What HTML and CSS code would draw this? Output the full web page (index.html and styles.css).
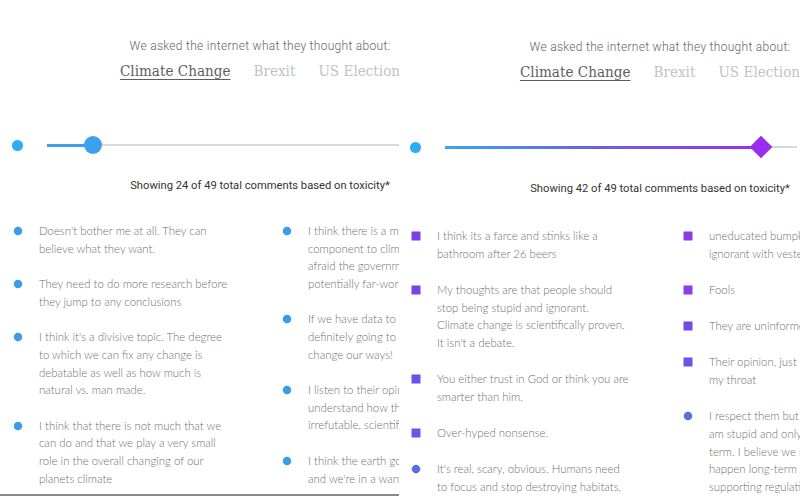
FILE: index.html
```html
<!DOCTYPE html>
<html lang="en">
<head>
<meta charset="utf-8">
<title>Toxicity comments</title>
<link rel="stylesheet" href="styles.css">
</head>
<body>
<div class="page">
  <section class="panel panel--ruled">
    <div class="center">
      <p class="intro">We asked the internet what they thought about:</p>
      <nav class="tabs">
        <span class="tab tab--active">Climate Change</span>
        <span class="tab">Brexit</span>
        <span class="tab">US Election</span>
      </nav>
    </div>
    <div class="slider">
      <span class="slider__dot"></span>
      <div class="slider__track">
        <div class="slider__fill slider__fill--blue" style="width:46px"></div>
        <span class="slider__thumb" style="left:46px"></span>
      </div>
    </div>
    <div class="center">
      <p class="showing">Showing 24 of 49 total comments based on toxicity*</p>
    </div>
    <div class="comments">
      <ul class="col">
        <li class="comment"><span class="bullet bullet--round" style="background:#3b9de6"></span><p class="comment__text">Doesn't bother me at all. They can<br>believe what they want.</p></li>
        <li class="comment"><span class="bullet bullet--round" style="background:#3b9de6"></span><p class="comment__text">They need to do more research before<br>they jump to any conclusions</p></li>
        <li class="comment"><span class="bullet bullet--round" style="background:#3b9de6"></span><p class="comment__text">I think it's a divisive topic. The degree<br>to which we can fix any change is<br>debatable as well as how much is<br>natural vs. man made.</p></li>
        <li class="comment"><span class="bullet bullet--round" style="background:#3b9de6"></span><p class="comment__text">I think that there is not much that we<br>can do and that we play a very small<br>role in the overall changing of our<br>planets climate</p></li>
      </ul>
      <ul class="col">
        <li class="comment"><span class="bullet bullet--round" style="background:#3b9de6"></span><p class="comment__text">I think there is a major political<br>component to climate change. I'm<br>afraid the government will make<br>potentially far-worse decisions.</p></li>
        <li class="comment"><span class="bullet bullet--round" style="background:#3b9de6"></span><p class="comment__text">If we have data to back it up, we're<br>definitely going to have to<br>change our ways!</p></li>
        <li class="comment"><span class="bullet bullet--round" style="background:#3b9de6"></span><p class="comment__text">I listen to their opinions but I don't<br>understand how they ignore<br>irrefutable, scientific evidence.</p></li>
        <li class="comment"><span class="bullet bullet--round" style="background:#3b9de6"></span><p class="comment__text">I think the earth goes through cycles<br>and we're in a warming one.</p></li>
      </ul>
    </div>
  </section>

  <section class="panel panel--low">
    <div class="center">
      <p class="intro">We asked the internet what they thought about:</p>
      <nav class="tabs">
        <span class="tab tab--active">Climate Change</span>
        <span class="tab">Brexit</span>
        <span class="tab">US Election</span>
      </nav>
    </div>
    <div class="slider slider--right">
      <span class="slider__dot"></span>
      <div class="slider__track">
        <div class="slider__fill slider__fill--gradient" style="width:316px"></div>
        <span class="slider__diamond" style="left:316px"></span>
      </div>
    </div>
    <div class="center">
      <p class="showing">Showing 42 of 49 total comments based on toxicity*</p>
    </div>
    <div class="comments comments--right">
      <ul class="col">
        <li class="comment"><span class="bullet bullet--square" style="background:#7f3ee6"></span><p class="comment__text">I think its a farce and stinks like a<br>bathroom after 26 beers</p></li>
        <li class="comment"><span class="bullet bullet--square" style="background:#7b40e6"></span><p class="comment__text">My thoughts are that people should<br>stop being stupid and ignorant.<br>Climate change is scientifically proven.<br>It isn't a debate.</p></li>
        <li class="comment"><span class="bullet bullet--square" style="background:#6456e6"></span><p class="comment__text">You either trust in God or think you are<br>smarter than him.</p></li>
        <li class="comment"><span class="bullet bullet--square" style="background:#5f5ce6"></span><p class="comment__text">Over-hyped nonsense.</p></li>
        <li class="comment"><span class="bullet bullet--round" style="background:#586ee6"></span><p class="comment__text">It's real, scary, obvious. Humans need<br>to focus and stop destroying habitats,<br>and start protecting our planet.</p></li>
      </ul>
      <ul class="col">
        <li class="comment"><span class="bullet bullet--square" style="background:#8a3ce6"></span><p class="comment__text">uneducated bumpkins and the<br>ignorant with vested interests</p></li>
        <li class="comment"><span class="bullet bullet--square" style="background:#8a3ce6"></span><p class="comment__text">Fools</p></li>
        <li class="comment"><span class="bullet bullet--square" style="background:#7a46e6"></span><p class="comment__text">They are uninformed and selfish.</p></li>
        <li class="comment"><span class="bullet bullet--square" style="background:#6a56e6"></span><p class="comment__text">Their opinion, just shove it down<br>my throat</p></li>
        <li class="comment"><span class="bullet bullet--round" style="background:#5a6ee8"></span><p class="comment__text">I respect them but they think I<br>am stupid and only see the short<br>term. I believe we need change to<br>happen long-term and I'm<br>supporting regulations.</p></li>
      </ul>
    </div>
  </section>
</div>
</body>
</html>
```

FILE: styles.css
```css
* { box-sizing: border-box; }
html, body { margin: 0; padding: 0; background: #fff; }
body { font-family: Roboto, "Liberation Sans", sans-serif; }

.page {
  display: flex;
  width: 800px;
  height: 500px;
  overflow: hidden;
}

.panel {
  width: 400px;
  height: 500px;
  flex: none;
  overflow: hidden;
  display: flex;
  flex-direction: column;
  padding-top: 38px;
}
.panel--ruled {
  width: 399px;
  margin-right: 1px;
  height: 496px;
  border-bottom: 2px solid #8a8a8a;
}
.panel--low { padding-top: 39px; }

.center {
  width: 520px;
  flex: none;
  text-align: center;
}

.intro {
  margin: 0;
  font-family: Roboto, sans-serif;
  font-weight: 300;
  font-size: 12px;
  line-height: 16px;
  letter-spacing: 0.3px;
  color: #666;
  white-space: nowrap;
}

.tabs {
  display: flex;
  justify-content: center;
  gap: 23px;
  margin-top: 7px;
  font-family: "DejaVu Serif", serif;
  font-stretch: condensed;
  font-weight: 300;
  font-size: 15.1px;
  line-height: 20px;
}
.tab { color: #c2c2c2; white-space: nowrap; }
.tab--active {
  color: #5e5e5e;
  text-decoration: underline;
  text-decoration-thickness: 1px;
  text-underline-offset: 3px;
}

.slider {
  display: flex;
  align-items: center;
  height: 18px;
  margin-top: 55px;
  padding-left: 12px;
  flex: none;
}
.slider--right { padding-left: 10px; margin-top: 56px; padding-right: 3px; }
.slider__dot {
  width: 11px;
  height: 11px;
  border-radius: 50%;
  background: #29aef0;
  flex: none;
}
.slider__track {
  position: relative;
  flex: 1;
  height: 2px;
  margin-left: 24px;
  background: #d9d9d9;
}
.slider__fill {
  height: 3px;
  margin-top: -0.5px;
}
.slider__fill--blue { background: #3b9fee; }
.slider__fill--gradient { background: linear-gradient(90deg, #3aa6ea 0%, #6a62e6 45%, #9a2ef2 100%); }
.slider__thumb {
  position: absolute;
  top: 1px;
  width: 18px;
  height: 18px;
  margin: -9px 0 0 -9px;
  border-radius: 50%;
  background: #3d9ff0;
}
.slider__diamond {
  position: absolute;
  top: 1px;
  width: 16px;
  height: 16px;
  margin: -8px 0 0 -8px;
  background: #9a2cf2;
  transform: rotate(45deg);
}

.showing {
  margin: 24px 0 0;
  font-family: Roboto, sans-serif;
  font-size: 11.2px;
  line-height: 16px;
  color: #333;
  white-space: nowrap;
}
.panel--low .showing { margin-top: 25px; }

.comments {
  display: grid;
  grid-template-columns: 269px 269px;
  width: 600px;
  padding-left: 13px;
  margin-top: 28px;
  flex: none;
}
.comments--right { padding-left: 11px; margin-top: 30px; grid-template-columns: 272px 272px; }

.col {
  list-style: none;
  margin: 0;
  padding: 0;
  display: flex;
  flex-direction: column;
  gap: 18px;
}
.comments--right .col { gap: 18.5px; }

.comment {
  display: flex;
  gap: 16px;
  align-items: flex-start;
}
.bullet {
  flex: none;
  width: 10px;
  height: 10px;
  margin-top: 4px;
  display: block;
}
.bullet--round { border-radius: 50%; transform: scale(0.85); }
.bullet--square { transform: scale(0.9); }

.comment__text {
  margin: 0;
  font-family: Lato, "Open Sans", sans-serif;
  font-weight: 300;
  font-size: 11.4px;
  line-height: 17.6px;
  color: #707070;
  white-space: nowrap;
}
.comments--right .comment__text { line-height: 17.7px; }
```
